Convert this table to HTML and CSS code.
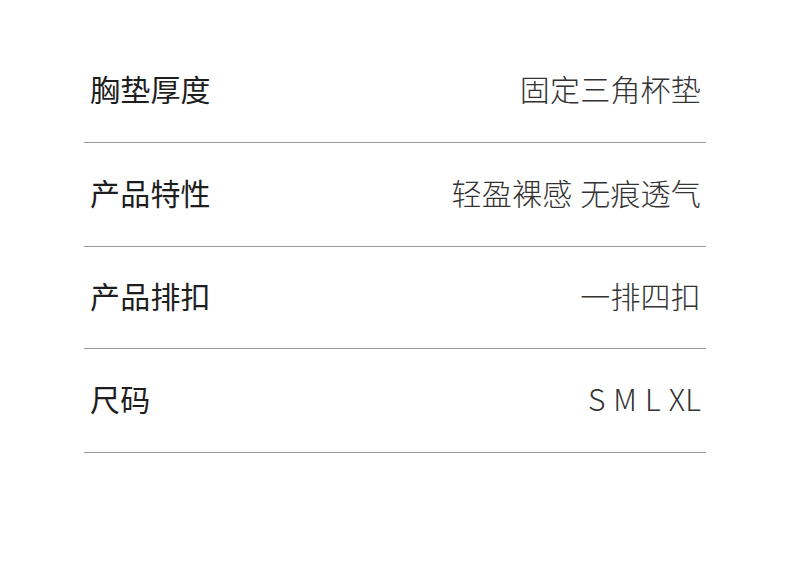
FILE: index.html
```html
<!DOCTYPE html>
<html lang="zh-CN">
<head>
<meta charset="utf-8">
<link rel="stylesheet" href="styles.css">
</head>
<body>
<div class="spec">
  <div class="row"><span class="label">胸垫厚度</span><span class="value">固定三角杯垫</span></div>
  <div class="row"><span class="label">产品特性</span><span class="value">轻盈裸感 无痕透气</span></div>
  <div class="row row-short"><span class="label">产品排扣</span><span class="value">一排四扣</span></div>
  <div class="row"><span class="label">尺码</span><span class="value">S M L XL</span></div>
</div>
</body>
</html>
```
FILE: styles.css
```css
html, body {
  margin: 0;
  padding: 0;
  background: #ffffff;
}
body {
  width: 790px;
  height: 572px;
  font-family: "Noto Sans CJK SC", "Noto Sans", sans-serif;
}
.spec {
  width: 622px;
  margin-left: 84px;
  padding-top: 39px;
}
.row {
  box-sizing: border-box;
  height: 104px;
  border-bottom: 1px solid #9a9a9a;
  display: flex;
  align-items: center;
  justify-content: space-between;
  padding: 0 5px 6px 6px;
}
.row-short {
  height: 102px;
}
.label {
  font-size: 30px;
  font-weight: 400;
  color: #1e1e1e;
  letter-spacing: 0.2px;
}
.value {
  font-size: 30px;
  font-weight: 200;
  color: #333333;
  letter-spacing: 0.2px;
  word-spacing: 1px;
  white-space: pre;
}
```
